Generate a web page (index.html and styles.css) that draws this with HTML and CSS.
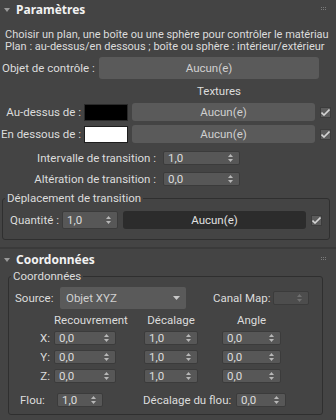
FILE: index.html
```html
<!DOCTYPE html>
<html>
<head>
  <title>Paramètres</title>
  <link rel="stylesheet" href="styles.css">
</head>
<body>
  <div class="rollout rollout-params">
    <div class="rollout-header">
      <svg class="caret" width="6" height="4" viewBox="0 0 6 4"><polygon points="0,0 6,0 3,4"/></svg>
      <span class="rollout-title">Paramètres</span>
      <svg class="grip" width="6" height="4" viewBox="0 0 6 4"><rect x="0" y="0" width="1" height="1"/><rect x="2" y="0" width="1" height="1"/><rect x="4" y="0" width="1" height="1"/><rect x="0" y="2" width="1" height="1"/><rect x="2" y="2" width="1" height="1"/><rect x="4" y="2" width="1" height="1"/></svg>
    </div>

    <div class="hint">
      Choisir un plan, une boîte ou une sphère pour contrôler le matériau<br>
      Plan : au-dessus/en dessous ; boîte ou sphère : intérieur/extérieur
    </div>

    <div class="row row-control">
      <span class="label label-control">Objet de contrôle :</span>
      <button class="btn btn-control">Aucun(e)</button>
    </div>

    <div class="textures-title">Textures</div>

    <div class="row row-map">
      <span class="label label-map">Au-dessus de :</span>
      <span class="swatch swatch-black"></span>
      <button class="btn btn-map">Aucun(e)</button>
      <span class="check"><svg width="9" height="7" viewBox="0 0 9 7"><path d="M0.5 3.5 L3 6 L8.5 0.5" /></svg></span>
    </div>
    <div class="row row-map">
      <span class="label label-map">En dessous de :</span>
      <span class="swatch swatch-white"></span>
      <button class="btn btn-map">Aucun(e)</button>
      <span class="check"><svg width="9" height="7" viewBox="0 0 9 7"><path d="M0.5 3.5 L3 6 L8.5 0.5" /></svg></span>
    </div>

    <div class="row row-spin">
      <span class="label label-spin">Intervalle de transition :</span>
      <div class="spin spin-wide"><span>1,0</span><svg class="arrows" width="5" height="8" viewBox="0 0 5 8"><polygon points="0,3 2.5,0 5,3"/><polygon points="0,5 5,5 2.5,8"/></svg></div>
    </div>
    <div class="row row-spin">
      <span class="label label-spin">Altération de transition :</span>
      <div class="spin spin-wide"><span>0,0</span><svg class="arrows" width="5" height="8" viewBox="0 0 5 8"><polygon points="0,3 2.5,0 5,3"/><polygon points="0,5 5,5 2.5,8"/></svg></div>
    </div>

    <fieldset class="group group-displace">
      <legend>Déplacement de transition</legend>
      <div class="row row-qty">
        <span class="label label-qty">Quantité :</span>
        <div class="spin spin-qty"><span>1,0</span><svg class="arrows" width="5" height="8" viewBox="0 0 5 8"><polygon points="0,3 2.5,0 5,3"/><polygon points="0,5 5,5 2.5,8"/></svg></div>
        <button class="btn btn-dark">Aucun(e)</button>
        <span class="check"><svg width="9" height="7" viewBox="0 0 9 7"><path d="M0.5 3.5 L3 6 L8.5 0.5" /></svg></span>
      </div>
    </fieldset>
  </div>

  <div class="rollout rollout-coords">
    <div class="rollout-header">
      <svg class="caret" width="6" height="4" viewBox="0 0 6 4"><polygon points="0,0 6,0 3,4"/></svg>
      <span class="rollout-title">Coordonnées</span>
      <svg class="grip" width="6" height="4" viewBox="0 0 6 4"><rect x="0" y="0" width="1" height="1"/><rect x="2" y="0" width="1" height="1"/><rect x="4" y="0" width="1" height="1"/><rect x="0" y="2" width="1" height="1"/><rect x="2" y="2" width="1" height="1"/><rect x="4" y="2" width="1" height="1"/></svg>
    </div>

    <fieldset class="group group-coords">
      <legend>Coordonnées</legend>
      <div class="row row-source">
        <span class="label label-source">Source:</span>
        <div class="dropdown"><span>Objet XYZ</span><svg width="7" height="4" viewBox="0 0 7 4"><polygon points="0,0 7,0 3.5,4"/></svg></div>
        <span class="label label-channel">Canal Map:</span>
        <div class="spin spin-disabled"><span></span><svg class="arrows" width="5" height="8" viewBox="0 0 5 8"><polygon points="0,3 2.5,0 5,3"/><polygon points="0,5 5,5 2.5,8"/></svg></div>
      </div>

      <div class="xyz">
        <span></span>
        <span class="col-title title-tile">Recouvrement</span>
        <span class="col-title title-offset">Décalage</span>
        <span class="col-title title-angle">Angle</span>

        <span class="axis">X:</span>
        <div class="spin spin-tile"><span>0,0</span><svg class="arrows" width="5" height="8" viewBox="0 0 5 8"><polygon points="0,3 2.5,0 5,3"/><polygon points="0,5 5,5 2.5,8"/></svg></div>
        <div class="spin spin-offset"><span>1,0</span><svg class="arrows" width="5" height="8" viewBox="0 0 5 8"><polygon points="0,3 2.5,0 5,3"/><polygon points="0,5 5,5 2.5,8"/></svg></div>
        <div class="spin spin-angle"><span>0,0</span><svg class="arrows" width="5" height="8" viewBox="0 0 5 8"><polygon points="0,3 2.5,0 5,3"/><polygon points="0,5 5,5 2.5,8"/></svg></div>

        <span class="axis">Y:</span>
        <div class="spin spin-tile"><span>0,0</span><svg class="arrows" width="5" height="8" viewBox="0 0 5 8"><polygon points="0,3 2.5,0 5,3"/><polygon points="0,5 5,5 2.5,8"/></svg></div>
        <div class="spin spin-offset"><span>1,0</span><svg class="arrows" width="5" height="8" viewBox="0 0 5 8"><polygon points="0,3 2.5,0 5,3"/><polygon points="0,5 5,5 2.5,8"/></svg></div>
        <div class="spin spin-angle"><span>0,0</span><svg class="arrows" width="5" height="8" viewBox="0 0 5 8"><polygon points="0,3 2.5,0 5,3"/><polygon points="0,5 5,5 2.5,8"/></svg></div>

        <span class="axis">Z:</span>
        <div class="spin spin-tile"><span>0,0</span><svg class="arrows" width="5" height="8" viewBox="0 0 5 8"><polygon points="0,3 2.5,0 5,3"/><polygon points="0,5 5,5 2.5,8"/></svg></div>
        <div class="spin spin-offset"><span>1,0</span><svg class="arrows" width="5" height="8" viewBox="0 0 5 8"><polygon points="0,3 2.5,0 5,3"/><polygon points="0,5 5,5 2.5,8"/></svg></div>
        <div class="spin spin-angle"><span>0,0</span><svg class="arrows" width="5" height="8" viewBox="0 0 5 8"><polygon points="0,3 2.5,0 5,3"/><polygon points="0,5 5,5 2.5,8"/></svg></div>
      </div>

      <div class="row row-blur">
        <span class="label label-blur">Flou:</span>
        <div class="spin spin-blur"><span>1,0</span><svg class="arrows" width="5" height="8" viewBox="0 0 5 8"><polygon points="0,3 2.5,0 5,3"/><polygon points="0,5 5,5 2.5,8"/></svg></div>
        <span class="label label-blur-offset">Décalage du flou:</span>
        <div class="spin spin-blur-offset"><span>0,0</span><svg class="arrows" width="5" height="8" viewBox="0 0 5 8"><polygon points="0,3 2.5,0 5,3"/><polygon points="0,5 5,5 2.5,8"/></svg></div>
      </div>
    </fieldset>
  </div>
</body>
</html>
```

FILE: styles.css
```css
:root {
  --color-panel: #444444;
  --color-field: #575757;
  --color-field-border: #3b3b3b;
  --color-button: #5a5a5a;
  --color-button-dark: #2c2c2c;
  --color-group-border: #2f2f2f;
  --color-text: #dcdcdc;
  --color-text-button: #d0d0d0;
  --color-title: #f2f2f2;
  --color-arrow: #b8b8b8;

  --font-family: Roboto, "Noto Sans", sans-serif;
  --font-title: "Noto Sans", Roboto, sans-serif;
}

html, body {
  margin: 0;
  background-color: var(--color-panel);
}

body {
  width: 336px;
  height: 420px;
  overflow: hidden;
  font-family: var(--font-family);
  font-size: 11.5px;
  color: var(--color-text);
}

button {
  font-family: inherit;
  font-size: inherit;
  padding: 0;
  cursor: pointer;
}

.rollout-params {
  height: 247px;
  border-bottom: 2px solid #3a3a3a;
}

/* Rollout header */
.rollout-header {
  display: flex;
  align-items: center;
  height: 18px;
}

.caret {
  fill: #9a9a9a;
  margin: 1px 0 0 4px;
}

.rollout-title {
  margin-left: 6px;
  font-family: var(--font-title);
  font-weight: 700;
  font-size: 12px;
  color: var(--color-title);
}

.grip {
  fill: #7a7a7a;
  margin-left: auto;
  margin-right: 9px;
}

.hint {
  margin: 11px 0 0 5px;
  line-height: 12px;
  font-size: 11px;
  white-space: nowrap;
}

.row {
  display: flex;
  align-items: center;
}

.label {
  white-space: nowrap;
}

/* Control object */
.row-control {
  margin-top: 4px;
  height: 22px;
}

.label-control {
  width: 97px;
  padding-left: 2px;
}

.btn {
  border: none;
  border-radius: 3px;
  background-color: var(--color-button);
  color: var(--color-text-button);
}

.btn-control {
  width: 220px;
  height: 22px;
}

.textures-title {
  margin: 5px 0 0 197px;
  line-height: 14px;
}

/* Map rows */
.row-map {
  height: 18px;
  margin-top: 4px;
}

.textures-title + .row-map {
  margin-top: 5px;
}

.label-map {
  width: 81px;
  text-align: right;
}

.swatch {
  width: 42px;
  height: 15px;
  margin-left: 3px;
  border: 1px solid #2a2a2a;
}

.swatch-black {
  background-color: #000000;
}

.swatch-white {
  background-color: #ffffff;
  border-color: #1e1e1e;
}

.btn-map {
  width: 183px;
  height: 18px;
  margin-left: 4px;
}

.check {
  display: flex;
  align-items: center;
  justify-content: center;
  width: 11px;
  height: 11px;
  margin-left: 5px;
  background-color: #5c5c5c;
  border: 1px solid #3c3c3c;
  box-sizing: border-box;
}

.check svg {
  fill: none;
  stroke: #d4d4d4;
  stroke-width: 1.6;
}

/* Spinner */
.spin {
  display: flex;
  align-items: center;
  justify-content: space-between;
  height: 14px;
  padding: 0 6px 0 4px;
  box-sizing: border-box;
  background-color: var(--color-field);
  border: 1px solid var(--color-field-border);
  border-radius: 2px;
}

.arrows {
  fill: var(--color-arrow);
}

.row-spin {
  margin-top: 8px;
  height: 14px;
}

.row-spin + .row-spin {
  margin-top: 7px;
}

.label-spin {
  width: 156px;
  text-align: right;
}

.spin-wide {
  width: 77px;
  margin-left: 7px;
}

/* Group boxes */
.group {
  margin: 0;
  padding: 0;
  border: 1px solid var(--color-group-border);
  border-radius: 3px;
}

.group legend {
  padding: 0 2px;
  margin-left: 2px;
  line-height: 14px;
}

.group-displace {
  margin: 5px 6px 0 2px;
  padding-bottom: 10px;
}

.row-qty {
  margin-top: 6px;
  height: 18px;
}

.label-qty {
  width: 52px;
  padding-left: 7px;
}

.spin-qty {
  width: 56px;
  height: 18px;
}

.btn-dark {
  width: 183px;
  height: 18px;
  margin-left: 5px;
  background-color: var(--color-button-dark);
  color: #e0e0e0;
}

/* Coordinates rollout */
.rollout-coords .rollout-header {
  margin-top: 1px;
}

.group-coords {
  margin: 1px 13px 0 8px;
  height: 146px;
  box-sizing: border-box;
}

.row-source {
  margin-top: 4px;
  height: 22px;
}

.label-source {
  width: 45px;
  padding-left: 6px;
}

.dropdown {
  display: flex;
  align-items: center;
  justify-content: space-between;
  width: 126px;
  height: 22px;
  padding: 0 6px 0 6px;
  box-sizing: border-box;
  background-color: var(--color-button);
  border-radius: 2px;
  color: var(--color-text-button);
}

.dropdown svg {
  fill: #c8c8c8;
}

.label-channel {
  width: 55px;
  margin-left: 27px;
}

.spin-disabled {
  width: 36px;
  margin-left: 5px;
  background-color: #4d4d4d;
}

.spin-disabled .arrows {
  fill: #707070;
}

/* Tiling / offset / angle grid */
.xyz {
  display: grid;
  grid-template-columns: 45px 90px 78px 59px;
  grid-template-rows: 13px 14px 14px 14px;
  row-gap: 5px;
  margin-top: 4px;
  align-items: center;
}

.col-title {
  text-align: center;
  white-space: nowrap;
}

.title-tile,
.spin-tile {
  width: 62px;
}

.title-offset,
.spin-offset {
  width: 54px;
}

.title-angle,
.spin-angle {
  width: 59px;
}

.axis {
  text-align: right;
  padding-right: 4px;
}

.row-blur {
  margin-top: 10px;
  height: 14px;
}

.label-blur {
  width: 37px;
  padding-left: 11px;
}

.spin-blur {
  width: 46px;
}

.label-blur-offset {
  width: 93px;
  margin-left: 40px;
}

.spin-blur-offset {
  width: 50px;
}
```
